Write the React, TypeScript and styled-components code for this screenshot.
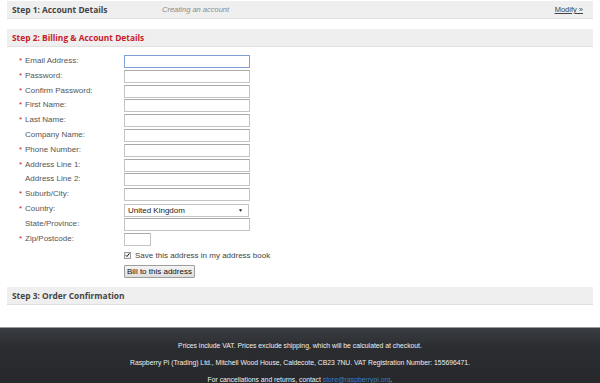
import * as React from "react";
import styled, { createGlobalStyle } from "styled-components";

const GlobalStyle = createGlobalStyle`
  html, body {
    margin: 0;
    padding: 0;
    background: #ffffff;
    font-family: "Liberation Sans", Arial, sans-serif;
  }
`;

const Page = styled.div`
  width: 600px;
  height: 383px;
  display: flex;
  flex-direction: column;
  overflow: hidden;
`;

const Main = styled.div`
  padding: 1px 7px 0 7px;
  display: flex;
  flex-direction: column;
`;

const StepBar = styled.div<{ $gap?: number }>`
  height: 18px;
  box-sizing: border-box;
  margin-top: ${(p) => p.$gap ?? 0}px;
  background: #efefef;
  border-bottom: 1px solid #e0e0e0;
  display: flex;
  align-items: center;
  padding: 0 10px 0 5px;
  font-family: "Open Sans", "DejaVu Sans", sans-serif;
`;

const StepTitle = styled.span<{ $active?: boolean }>`
  font-size: 8.4px;
  font-weight: 700;
  color: ${(p) => (p.$active ? "#c8202a" : "#444444")};
  width: ${(p) => (p.$active ? "auto" : "150px")};
`;

const StepNote = styled.span`
  font-family: "Liberation Sans", Arial, sans-serif;
  font-style: italic;
  font-size: 7.5px;
  color: #8a8a8a;
  flex: 1;
`;

const Modify = styled.a`
  font-family: "Liberation Sans", Arial, sans-serif;
  font-size: 7.5px;
  color: #444444;
  text-decoration: underline;
`;

const Form = styled.div`
  display: grid;
  grid-template-columns: 105px 130px;
  grid-auto-rows: 14.8px;
  margin: 8px 0 0 12px;
  align-items: start;
`;

const Label = styled.label<{ $required?: boolean }>`
  font-size: 8px;
  color: #555555;
  line-height: 10px;
  padding-top: 1px;
  padding-left: 6px;
  position: relative;
  &::before {
    content: ${(p) => (p.$required ? '"*"' : '""')};
    color: #c8202a;
    position: absolute;
    left: 0;
    top: 1px;
  }
`;

const TextInput = styled.input<{ $focus?: boolean; $w?: number }>`
  width: ${(p) => p.$w ?? 126}px;
  height: 13px;
  box-sizing: border-box;
  border: 1px solid ${(p) => (p.$focus ? "#7d9fd6" : "#c4c4c4")};
  border-top-color: ${(p) => (p.$focus ? "#7d9fd6" : "#a9a9a9")};
  background: #ffffff;
  padding: 0 2px;
  margin: 0;
  outline: none;
  font-size: 8px;
  font-family: inherit;
`;

const Select = styled.div`
  width: 125px;
  height: 13px;
  box-sizing: border-box;
  border: 1px solid #c4c4c4;
  background: #ffffff;
  display: flex;
  align-items: center;
  justify-content: space-between;
  padding: 0 5px 0 3px;
  font-size: 8px;
  color: #222222;
  margin-top: 1px;
`;

const Arrow = styled.span`
  font-size: 5px;
  color: #222222;
`;

const Extras = styled.div`
  margin: 3px 0 0 117px;
  display: flex;
  flex-direction: column;
  align-items: flex-start;
  gap: 5px;
`;

const CheckRow = styled.label`
  display: flex;
  align-items: center;
  gap: 4px;
  font-size: 8px;
  color: #444444;
  height: 10px;
`;

const Check = styled.span`
  width: 7px;
  height: 7px;
  box-sizing: border-box;
  border: 1px solid #9a9a9a;
  background: #f2f2f2;
  display: flex;
  align-items: center;
  justify-content: center;
`;

const Button = styled.button`
  height: 13px;
  box-sizing: border-box;
  padding: 0 2px;
  border: 1px solid #9d9d9d;
  border-radius: 1px;
  background: linear-gradient(#f4f4f4, #dedede);
  font-family: "Liberation Sans", Arial, sans-serif;
  font-size: 8px;
  color: #111111;
  line-height: 11px;
`;

const Footer = styled.footer`
  margin-top: 22px;
  flex: 1;
  border-top: 1px solid #9a9a9a;
  background: linear-gradient(#3a3d41 0%, #2a2c30 30%, #25272a 100%);
  display: flex;
  flex-direction: column;
  align-items: center;
  padding-top: 14px;
`;

const FooterLine = styled.p`
  margin: 0;
  height: 17px;
  font-size: 6.8px;
  color: #f0f0f0;
  line-height: 8px;
`;

const FooterLink = styled.a`
  color: #3f7cc0;
  text-decoration: underline;
`;

type Field = {
  label: string;
  required: boolean;
  kind?: "select" | "zip";
  focus?: boolean;
};

const fields: Field[] = [
  { label: "Email Address:", required: true, focus: true },
  { label: "Password:", required: true },
  { label: "Confirm Password:", required: true },
  { label: "First Name:", required: true },
  { label: "Last Name:", required: true },
  { label: "Company Name:", required: false },
  { label: "Phone Number:", required: true },
  { label: "Address Line 1:", required: true },
  { label: "Address Line 2:", required: false },
  { label: "Suburb/City:", required: true },
  { label: "Country:", required: true, kind: "select" },
  { label: "State/Province:", required: false },
  { label: "Zip/Postcode:", required: true, kind: "zip" },
];

export default function App() {
  return (
    <Page>
      <GlobalStyle />
      <Main>
        <StepBar>
          <StepTitle>Step 1: Account Details</StepTitle>
          <StepNote>Creating an account</StepNote>
          <Modify href="#">Modify »</Modify>
        </StepBar>
        <StepBar $gap={10}>
          <StepTitle $active>Step 2: Billing &amp; Account Details</StepTitle>
        </StepBar>
        <Form>
          {fields.map((f) => (
            <React.Fragment key={f.label}>
              <Label $required={f.required}>{f.label}</Label>
              {f.kind === "select" ? (
                <Select>
                  <span>United Kingdom</span>
                  <Arrow>▼</Arrow>
                </Select>
              ) : (
                <TextInput $focus={f.focus} $w={f.kind === "zip" ? 27 : 126} />
              )}
            </React.Fragment>
          ))}
        </Form>
        <Extras>
          <CheckRow>
            <Check>
              <svg width="6" height="6" viewBox="0 0 6 6">
                <path d="M0.8 3.2 L2.4 4.8 L5.3 0.9" stroke="#222" strokeWidth="1.2" fill="none" />
              </svg>
            </Check>
            Save this address in my address book
          </CheckRow>
          <Button>Bill to this address</Button>
        </Extras>
        <StepBar $gap={9}>
          <StepTitle>Step 3: Order Confirmation</StepTitle>
        </StepBar>
      </Main>
      <Footer>
        <FooterLine>Prices include VAT. Prices exclude shipping, which will be calculated at checkout.</FooterLine>
        <FooterLine>
          Raspberry Pi (Trading) Ltd., Mitchell Wood House, Caldecote, CB23 7NU. VAT Registration Number: 155696471.
        </FooterLine>
        <FooterLine>
          For cancellations and returns, contact <FooterLink href="#">store@raspberrypi.org</FooterLink>.
        </FooterLine>
      </Footer>
    </Page>
  );
}
